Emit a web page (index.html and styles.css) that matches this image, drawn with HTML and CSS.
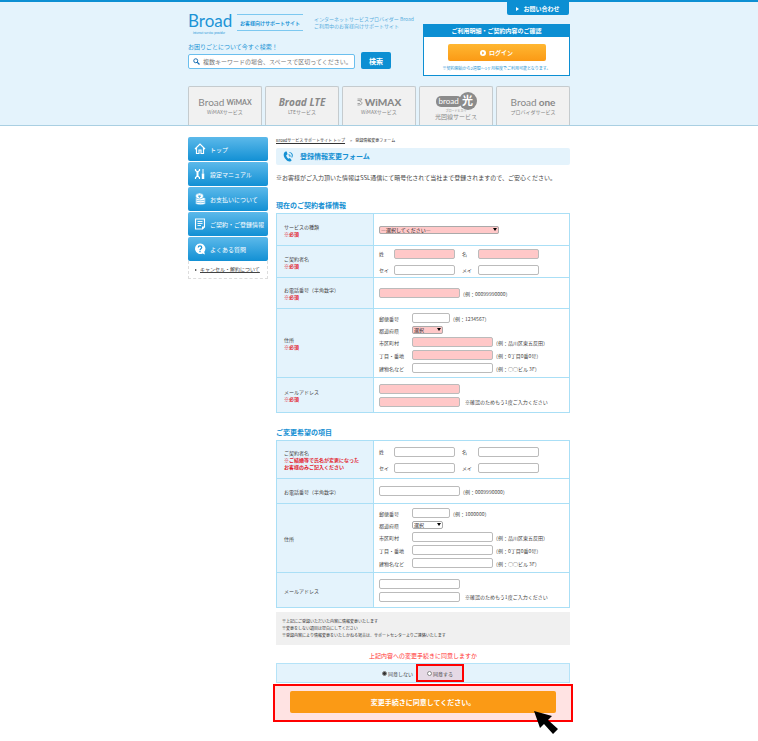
FILE: index.html
```
<!DOCTYPE html>
<html lang="ja">
  <head>
    <meta charset="utf-8">
    <title>登録情報変更フォーム</title>
    <link rel="stylesheet" href="styles.css">
  </head>
  <body>
  <header class="header">
    <div class="container header-inner">
      <a class="contact" href="#"><span class="tri"></span>お問い合わせ</a>
      <div class="header-left">
        <div class="brand">
          <a class="logo" href="#">Broad<small>internet service provider</small></a>
          <p class="site-name">お客様向けサポートサイト</p>
          <p class="lead">インターネットサービスプロバイダー Broad<br>ご利用中のお客様向けサポートサイト</p>
        </div>
        <form class="search">
          <label class="search-label" for="keyword">お困りごとについて今すぐ検索！</label>
          <div class="search-row">
            <div class="search-box">
              <svg width="7" height="7" viewBox="0 0 14 14"><circle cx="5.5" cy="5.5" r="4" fill="none" stroke="#1b6fb3" stroke-width="2"/><path d="M8.5 8.5L13 13" stroke="#1b6fb3" stroke-width="2.6"/></svg>
              <input id="keyword" type="text" placeholder="複数キーワードの場合、スペースで区切ってください。">
            </div>
            <button class="search-button" type="button">検索</button>
          </div>
        </form>
      </div>
      <section class="login">
        <h2>ご利用明細・ご契約内容のご確認</h2>
        <button class="login-button" type="button">
          <svg width="6" height="6" viewBox="0 0 12 12"><circle cx="6" cy="6" r="6" fill="#fff"/><path d="M4.5 3L8.5 6L4.5 9Z" fill="#fb9a15"/></svg>ログイン
        </button>
        <p>※契約開始から2週間～1ヶ月程度でご利用可能となります。</p>
      </section>
    </div>
    <nav class="container tabs">
      <a href="#"><span class="tab-logo">Broad <b>WiMAX</b></span><span>WiMAXサービス</span></a>
      <a href="#"><span class="tab-logo lte">Broad LTE</span><span>LTEサービス</span></a>
      <a href="#"><span class="tab-logo wimax"><svg width="6" height="8" viewBox="0 0 12 16"><path d="M1 2H10L6 7C13 8 11 15 1 14M1 5H6M1 11H6" fill="none" stroke="#909090" stroke-width="1.6"/></svg>WiMAX</span><span>WiMAXサービス</span></a>
      <a href="#"><span class="hikari"><i>broad</i><b>光</b></span><span class="ruby">ブロードヒカリ</span><span class="hikari-name">光回線サービス</span></a>
      <a href="#"><span class="tab-logo">Broad <em>one</em></span><span>プロバイダサービス</span></a>
    </nav>
  </header>

  <div class="container page">
    <aside class="side">
      <ul class="side-menu">
        <li><a href="#">
          <svg class="icon" viewBox="0 0 24 24"><path d="M2 12L12 2L22 12M5 10V21H10V14H14V21H19V10" fill="none" stroke="#fff" stroke-width="2.4"/></svg>トップ</a></li>
        <li><a href="#">
          <svg class="icon" viewBox="0 0 24 24"><path d="M3 2V5L7 8L11 5V2M3 22V19L7 16L11 19V22" fill="none" stroke="#fff" stroke-width="2.4"/><path d="M7 7V17" stroke="#fff" stroke-width="4"/><path d="M18 2V11" stroke="#fff" stroke-width="2"/><path d="M18 11V22" stroke="#fff" stroke-width="5"/></svg>設定マニュアル</a></li>
        <li><a href="#">
          <svg class="icon" viewBox="0 0 24 24"><g fill="#fff" stroke="#2a9fdc" stroke-width="1"><ellipse cx="13" cy="20" rx="10" ry="3.5"/><ellipse cx="13" cy="16" rx="10" ry="3.5"/><ellipse cx="13" cy="12" rx="10" ry="3.5"/><ellipse cx="11" cy="6" rx="8" ry="6"/></g><path d="M8 3L11 6L14 3M11 6V10M8 7H14" fill="none" stroke="#2a9fdc" stroke-width="1.2"/></svg>お支払いについて</a></li>
        <li><a href="#">
          <svg class="icon" viewBox="0 0 24 24"><path d="M3 2H21V18L17 22H3Z" fill="none" stroke="#fff" stroke-width="2.2"/><path d="M7 7H17M7 11H17M7 15H14" stroke="#fff" stroke-width="1.8"/><path d="M21 17L16 23V17Z" fill="#fff"/></svg>ご契約・ご登録情報</a></li>
        <li><a href="#">
          <svg class="icon" viewBox="0 0 24 24"><path d="M12 1A10.500 10.500 0 1 0 17 21L22 23L20.500 18A10.500 10.500 0 0 0 12 1Z" fill="#fff"/><path d="M8.500 9C8.500 4.500 15.500 4.500 15.500 9C15.500 11.500 12 11.500 12 14.500M12 16V18.500" fill="none" stroke="#1c93d6" stroke-width="2.4"/></svg>よくある質問</a></li>
      </ul>
      <p class="side-sub"><a href="#">キャンセル・解約について</a></p>
    </aside>

    <main class="main">
      <p class="breadcrumb"><a href="#">Broadサービス サポートサイト トップ</a><span>&gt;</span>登録情報変更フォーム</p>
      <h1 class="title">
        <svg width="11" height="11" viewBox="0 0 24 24"><path d="M6 1C0 3 0 12 6 18C10 23 16 25 19 20L15 15L12 17C9 15 7 11 7 9L10 7L8 1Z" fill="#1590d3"/><path d="M12 8C15 8 16 10 15 13M14 3C20 4 22 9 19 14" fill="none" stroke="#1590d3" stroke-width="2.2"/></svg>登録情報変更フォーム
      </h1>
      <p class="intro">※お客様がご入力頂いた情報はSSL通信にて暗号化されて当社まで登録されますので、ご安心ください。</p>

      <form>
      <h2 class="heading">現在のご契約者様情報</h2>
      <table class="form-table">
        <tr>
          <th><label for="service">サービスの種類</label><strong>※必須</strong></th>
          <td><span class="select wide need"><select id="service"><option>―選択してください―</option></select></span></td>
        </tr>
        <tr>
          <th>ご契約者名<strong>※必須</strong></th>
          <td>
            <div class="names">
              <label for="sei">姓</label><input class="need" id="sei" type="text">
              <label for="mei">名</label><input class="need" id="mei" type="text">
              <label for="sei-kana">セイ</label><input id="sei-kana" type="text">
              <label for="mei-kana">メイ</label><input id="mei-kana" type="text">
            </div>
          </td>
        </tr>
        <tr class="tel">
          <th><label for="tel">お電話番号（半角数字）</label><strong>※必須</strong></th>
          <td><div class="line"><input class="need" id="tel" type="tel"><span>（例：00099990000）</span></div></td>
        </tr>
        <tr class="address">
          <th>住所<strong>※必須</strong></th>
          <td>
            <div class="lines">
              <div class="line"><label for="zip">郵便番号</label><input class="short" id="zip" type="text"><span>（例：1234567）</span></div>
              <div class="line"><label for="pref">都道府県</label><span class="select need"><select id="pref"><option>選択</option></select></span></div>
              <div class="line"><label for="city">市区町村</label><input class="need" id="city" type="text"><span>（例：品川区東五反田）</span></div>
              <div class="line"><label for="block">丁目・番地</label><input class="need" id="block" type="text"><span>（例：0丁目0番0号）</span></div>
              <div class="line"><label for="building">建物名など</label><input id="building" type="text"><span>（例：○○ビル 3F）</span></div>
            </div>
          </td>
        </tr>
        <tr class="mail">
          <th><label for="mail">メールアドレス</label><strong>※必須</strong></th>
          <td>
            <div class="lines">
              <div class="line"><input class="need" id="mail" type="email"></div>
              <div class="line"><input class="need" id="mail-check" type="email"><label class="note" for="mail-check">※確認のためもう1度ご入力ください</label></div>
            </div>
          </td>
        </tr>
      </table>

      <h2 class="heading">ご変更希望の項目</h2>
      <table class="form-table">
        <tr class="new-name">
          <th>ご契約者名<strong>※ご結婚等で氏名が変更になった<br>お客様のみご記入ください</strong></th>
          <td>
            <div class="names">
              <label for="new-sei">姓</label><input id="new-sei" type="text">
              <label for="new-mei">名</label><input id="new-mei" type="text">
              <label for="new-sei-kana">セイ</label><input id="new-sei-kana" type="text">
              <label for="new-mei-kana">メイ</label><input id="new-mei-kana" type="text">
            </div>
          </td>
        </tr>
        <tr class="new-tel">
          <th><label for="new-tel">お電話番号（半角数字）</label></th>
          <td><div class="line"><input id="new-tel" type="tel"><span>（例：0009990000）</span></div></td>
        </tr>
        <tr class="address">
          <th>住所</th>
          <td>
            <div class="lines">
              <div class="line"><label for="new-zip">郵便番号</label><input class="short" id="new-zip" type="text"><span>（例：1000000）</span></div>
              <div class="line"><label for="new-pref">都道府県</label><span class="select"><select id="new-pref"><option>選択</option></select></span></div>
              <div class="line"><label for="new-city">市区町村</label><input id="new-city" type="text"><span>（例：品川区東五反田）</span></div>
              <div class="line"><label for="new-block">丁目・番地</label><input id="new-block" type="text"><span>（例：0丁目0番0号）</span></div>
              <div class="line"><label for="new-building">建物名など</label><input id="new-building" type="text"><span>（例：○○ビル 3F）</span></div>
            </div>
          </td>
        </tr>
        <tr class="mail">
          <th><label for="new-mail">メールアドレス</label></th>
          <td>
            <div class="lines">
              <div class="line"><input id="new-mail" type="email"></div>
              <div class="line"><input id="new-mail-check" type="email"><label class="note" for="new-mail-check">※確認のためもう1度ご入力ください</label></div>
            </div>
          </td>
        </tr>
      </table>

      <ul class="notes">
        <li>※上記にご登録いただいた内容に情報変更いたします</li>
        <li>※変更をしない項目は空白にしてください</li>
        <li>※登録内容により情報変更をいたしかねる場合は、サポートセンターよりご連絡いたします</li>
      </ul>
      <p class="agree-title">上記内容への変更手続きに同意しますか</p>
      <div class="agree">
        <label><input type="radio" name="agree" checked>同意しない</label>
        <label class="marked"><input type="radio" name="agree">同意する</label>
      </div>
      <div class="submit">
        <button type="button">変更手続きに同意してください。</button>
        <svg class="cursor" width="26" height="24" viewBox="0 0 26 24"><path d="M1 1L19 6L15 10L25 19L20 24L11 14L7 18Z" fill="#000"/></svg>
      </div>
      </form>
    </main>
  </div>
  </body>
</html>
```

FILE: styles.css
```
* {
  box-sizing: border-box;
}
body {
  margin: 0;
  font-family: "Noto Sans CJK JP", sans-serif;
  font-size: 5px;
  line-height: 7px;
  color: #444;
  background-color: #fff;
}
h1, h2, p, ul {
  margin: 0;
  padding: 0;
}
ul {
  list-style: none;
}
a {
  color: inherit;
  text-decoration: none;
}
svg {
  flex: none;
}
input, select, button {
  font-family: inherit;
  margin: 0;
}
button {
  border: 0;
  padding: 0;
  color: #fff;
  font-weight: bold;
  cursor: pointer;
}
.container {
  max-width: 382px;
  margin: 0 auto;
}

/* header */
.header {
  border-top: 2px solid #0c8fd3;
  border-bottom: 1px solid #a9cfe2;
  background-color: #e4f3fc;
}
.header-inner {
  position: relative;
  display: flex;
  justify-content: space-between;
  height: 84px;
}
.contact {
  position: absolute;
  top: 0;
  right: 1px;
  display: flex;
  align-items: center;
  justify-content: center;
  gap: 4px;
  width: 62px;
  height: 13px;
  border-radius: 0 0 2px 2px;
  background-color: #0c8fd3;
  color: #fff;
  font-size: 6px;
  font-weight: bold;
}
.tri {
  border: solid transparent;
  border-width: 2px 0 2px 3px;
  border-left-color: #fff;
}
.header-left {
  padding-top: 12px;
}
.brand {
  display: flex;
  height: 28px;
  color: #1c93d6;
}
.logo {
  width: 49px;
  font-family: Lato, sans-serif;
  font-size: 17px;
  line-height: 14px;
}
.logo small {
  display: block;
  padding: 3px 0 0 5px;
  font-size: 3px;
  line-height: 4px;
}
.site-name {
  height: 17px;
  margin-right: 11px;
  padding: 0 3px;
  border: solid #7cc8f0;
  border-width: 1px 0;
  line-height: 15px;
  font-weight: bold;
}
.lead {
  padding-top: 1px;
  color: #5aaedd;
}
.search-label {
  display: block;
  color: #1c93d6;
  font-size: 6px;
  line-height: 10px;
}
.search-row {
  display: flex;
  align-items: flex-end;
  gap: 6px;
}
.search-box {
  display: flex;
  align-items: center;
  gap: 3px;
  width: 167px;
  height: 15px;
  padding: 0 4px;
  border: 1px solid #6bbfee;
  border-radius: 2px;
  background-color: #fff;
}
.search-box input {
  flex: 1;
  min-width: 0;
  padding: 0;
  border: 0;
  outline: 0;
  font-size: 6px;
}
.search-box input::placeholder {
  color: #777;
}
.search-button {
  width: 30px;
  height: 17px;
  border-radius: 2px;
  background-color: #0c8fd3;
  font-size: 7px;
}
.login {
  width: 147px;
  height: 52px;
  margin-top: 22px;
  border: 1px solid #0c8fd3;
  background-color: #fff;
  text-align: center;
}
.login h2 {
  background-color: #0c8fd3;
  color: #fff;
  font-size: 6px;
  line-height: 12px;
}
.login-button {
  display: flex;
  align-items: center;
  justify-content: center;
  gap: 3px;
  width: 98px;
  height: 17px;
  margin: 7px auto 4px;
  border-radius: 2px;
  background: linear-gradient(#ffb732, #fb9a15);
  font-size: 6px;
}
.login p {
  color: #1c93d6;
  font-size: 4px;
}
.tabs {
  display: grid;
  grid-template-columns: repeat(5, 1fr);
  gap: 3px;
}
.tabs a {
  display: flex;
  flex-direction: column;
  align-items: center;
  height: 39px;
  padding-top: 10px;
  border: 1px solid #c5cbce;
  border-bottom: 0;
  border-radius: 2px 2px 0 0;
  background-color: #f1f1f1;
  color: #888;
}
.tab-logo {
  display: flex;
  align-items: center;
  gap: 2px;
  margin-bottom: 1px;
  font-family: Lato, sans-serif;
  font-size: 10px;
  line-height: 10px;
}
.tab-logo b {
  font-size: 7px;
}
.tab-logo em {
  font-style: normal;
  font-weight: bold;
}
.lte {
  font-family: "Open Sans", sans-serif;
  font-weight: bold;
  font-style: italic;
}
.wimax {
  font-weight: 900;
}
.hikari {
  display: flex;
  align-items: center;
  height: 16px;
  margin-top: -4px;
}
.hikari i {
  flex: none;
  width: 26px;
  padding-left: 3px;
  border-radius: 5px;
  background-color: #8b8b8b;
  color: #fff;
  font-family: Lato, sans-serif;
  font-size: 8px;
  font-style: normal;
  line-height: 11px;
}
.hikari b {
  flex: none;
  width: 18px;
  height: 18px;
  margin-left: -3px;
  border-radius: 50%;
  background-color: #8b8b8b;
  color: #fff;
  font-size: 11px;
  line-height: 17px;
  text-align: center;
}
.tabs .ruby {
  font-size: 3px;
  line-height: 4px;
}
.hikari-name {
  font-size: 6px;
}

/* side menu */
.page {
  display: grid;
  grid-template-columns: 80px 1fr;
  gap: 8px;
  padding: 11px 0 19px;
}
.side-menu {
  display: grid;
  gap: 1px;
}
.side-menu a {
  display: flex;
  align-items: center;
  gap: 4px;
  height: 24px;
  padding-left: 6px;
  border-radius: 2px;
  background: linear-gradient(#5cb9ea, #1290d4);
  color: #fff;
  font-size: 6px;
  white-space: nowrap;
}
.icon {
  width: 12px;
  height: 12px;
}
.side-sub {
  padding: 4px 6px 6px;
  border: 1px dashed #ddd;
  border-top: 0;
}
.side-sub::before {
  content: "";
  display: inline-block;
  margin-right: 3px;
  border: solid transparent;
  border-width: 1px 0 1px 2px;
  border-left-color: #333;
  vertical-align: middle;
}
.side-sub a, .breadcrumb a {
  text-decoration: underline;
}

/* main */
.breadcrumb {
  font-size: 4px;
  color: #333;
}
.breadcrumb span {
  margin: 0 3px 0 5px;
}
.title {
  display: flex;
  align-items: center;
  gap: 6px;
  height: 17px;
  margin-top: 4px;
  padding-left: 7px;
  border-radius: 2px;
  background-color: #e4f3fc;
  color: #1590d3;
  font-size: 7px;
}
.intro {
  margin-top: 9px;
  font-size: 6px;
}
.intro + form {
  padding-top: 19px;
}
.heading {
  padding-bottom: 3px;
  color: #1590d3;
  font-size: 7px;
  line-height: 10px;
}
.form-table {
  width: 100%;
  border-collapse: collapse;
}
.form-table + .heading {
  margin-top: 14px;
}
.form-table tr {
  height: 32px;
}
.form-table .tel {
  height: 31px;
}
.form-table .address {
  height: 69px;
}
.form-table .mail {
  height: 35px;
}
.form-table .new-name {
  height: 38px;
}
.form-table .new-tel {
  height: 25px;
}
.form-table th, .form-table td {
  border: 1px solid #aadff6;
  text-align: left;
  vertical-align: middle;
}
.form-table th {
  width: 97px;
  padding: 0 0 0 7px;
  background-color: #e4f3fc;
  font-weight: normal;
}
.form-table th strong {
  display: block;
  color: #e2202c;
}
.form-table td {
  padding: 0 0 0 5px;
}
.form-table input {
  width: 81px;
  height: 10px;
  padding: 0 2px;
  border: 1px solid #bbb;
  border-radius: 2px;
  background-color: #fff;
  font-size: 5px;
}
.form-table input.short {
  width: 38px;
}
.form-table .need, .need select {
  background-color: #ffc8c8;
}
.lines {
  display: grid;
  gap: 3px;
}
.line {
  display: flex;
  align-items: center;
}
.address .line label {
  width: 33px;
}
.line .note {
  margin-left: 5px;
}
.names {
  display: grid;
  grid-template-columns: 15px 61px 23px 61px;
  row-gap: 6px;
  align-items: center;
}
.form-table .names input {
  width: 61px;
}
.names label {
  white-space: nowrap;
}
.names label:nth-of-type(even) {
  padding-left: 7px;
}
.select {
  position: relative;
  display: block;
  width: 31px;
  height: 8px;
  border-radius: 2px;
}
.select.wide {
  width: 120px;
}
.select select {
  display: block;
  width: 100%;
  height: 8px;
  padding: 0 1px;
  border: 1px solid #aaa;
  border-radius: 2px;
  background-color: #fff;
  color: #222;
  font-size: 5px;
  line-height: 6px;
  appearance: none;
}
.select.need select {
  background-color: #ffc8c8;
}
.select::after {
  content: "";
  position: absolute;
  top: 2px;
  right: 2px;
  border: solid transparent;
  border-width: 3px 2px 0;
  border-top-color: #000;
}

/* agreement */
.notes {
  margin-top: 4px;
  padding: 6px;
  background-color: #f0f0f0;
  color: #333;
  font-size: 4px;
}
.agree-title {
  padding: 7px 0 4px;
  color: #f33;
  font-size: 6px;
  text-align: center;
}
.agree {
  display: flex;
  align-items: center;
  justify-content: center;
  gap: 3px;
  height: 20px;
  border: 1px solid #b5e3f8;
  background-color: #e4f3fc;
}
.agree label {
  display: flex;
  align-items: center;
  justify-content: center;
  gap: 1px;
}
.agree input {
  width: 5px;
  height: 5px;
  border: 1px solid #888;
  border-radius: 50%;
  background-color: #fff;
  appearance: none;
}
.agree input:checked {
  background-color: #333;
}
.agree .marked {
  width: 48px;
  height: 18px;
  border: 2px solid #f00;
  background-color: #e5d9e5;
}
.submit {
  position: relative;
  margin: 1px -3px 0;
  padding: 5px 15px 7px;
  border: 2px solid #f00;
  background-color: #ffe3e3;
}
.submit button {
  display: block;
  width: 100%;
  height: 22px;
  border-radius: 2px;
  background-color: #fb9a15;
  font-size: 7px;
}
.cursor {
  position: absolute;
  right: 12px;
  bottom: -14px;
}
```
